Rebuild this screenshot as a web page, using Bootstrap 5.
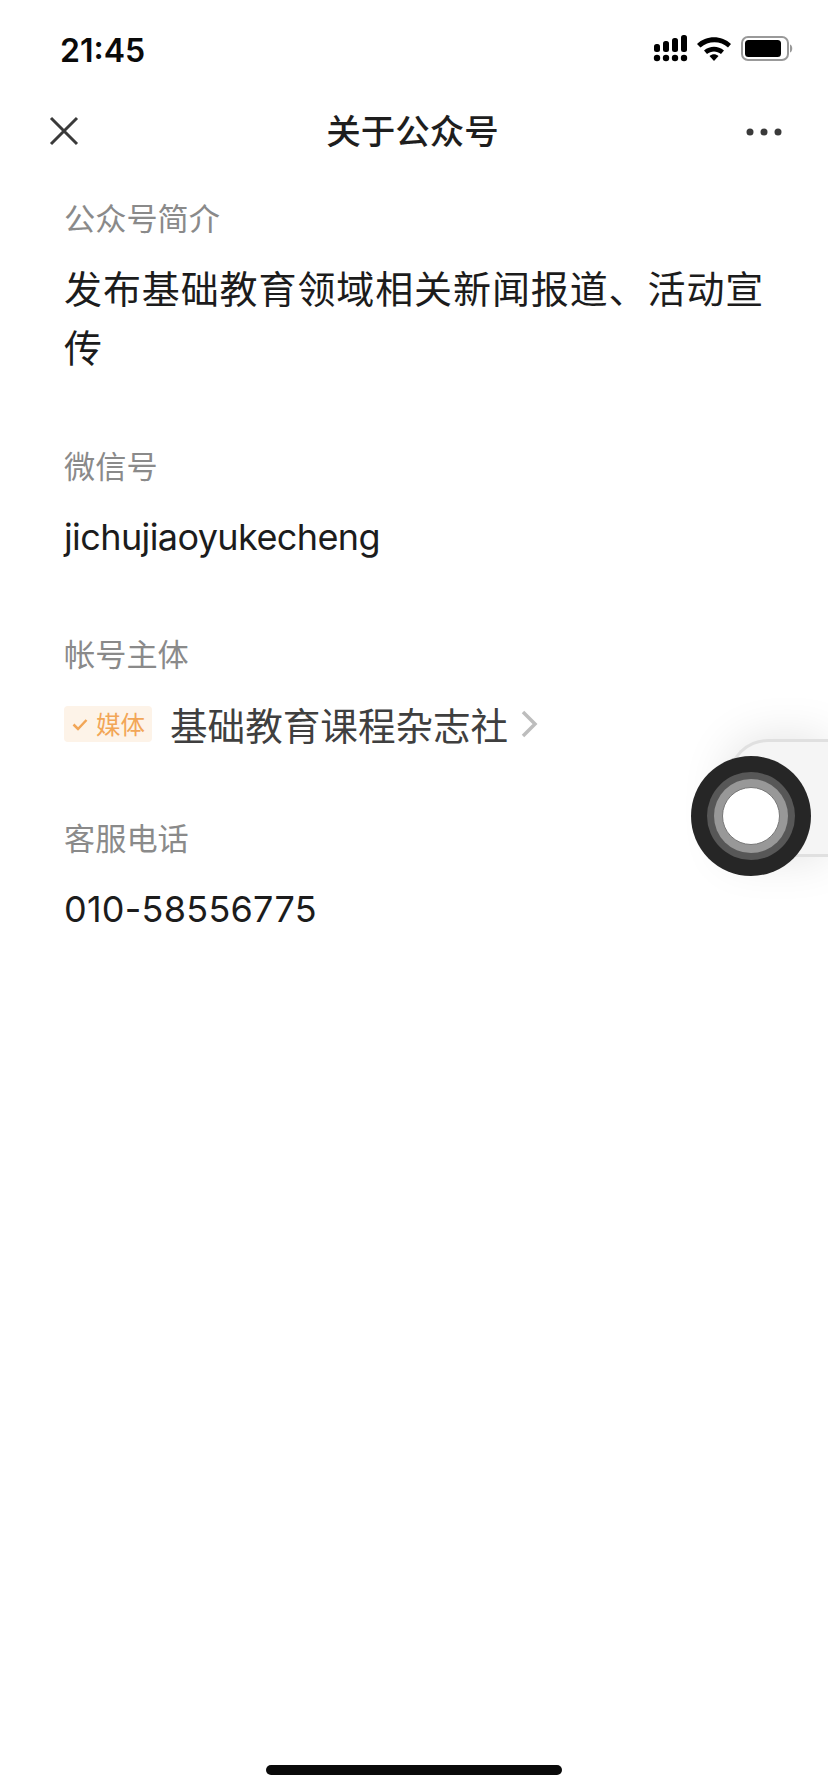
<!DOCTYPE html>
<html lang="zh"><head><meta charset="utf-8">
<link href="https://cdn.jsdelivr.net/npm/bootstrap@5.3.0/dist/css/bootstrap.min.css" rel="stylesheet">
<style>
html,body{width:828px;height:1792px;overflow:hidden;background:#fff;}
body{font-family:"Inter","Noto Sans CJK SC",sans-serif;position:relative;color:#1b1b1b;}
.phone-status{height:98px;padding:0 33px 0 60px;}
.clock-text{font-family:"Inter",sans-serif;font-weight:600;font-size:32px;line-height:1;color:#0a0a0a;margin-top:3px;}
.phone-nav{height:66px;padding:0 46px 0 49px;}
.nav-heading{font-family:"Noto Sans CJK SC",sans-serif;font-size:34.500px;font-weight:500;color:#1e1e1e;line-height:1;margin-bottom:3px;}
.nav-center{position:absolute;left:0;right:3px;text-align:center;}
.more-dots{margin-top:2px;}
.info-wrap{padding:0 58px 0 64px;}
.info-label{font-family:"Noto Sans CJK SC",sans-serif;font-size:31.200px;line-height:42px;color:#8a8a8a;}
.info-value{font-family:"Noto Sans CJK SC",sans-serif;font-size:38px;line-height:59px;color:#1c1c1c;letter-spacing:.9px;}
.latin-value{font-family:"Inter","Noto Sans CJK SC",sans-serif;font-size:36px;line-height:60px;}
.account-id{letter-spacing:-.6px;}
.phone-num{letter-spacing:.25px;}
.gap-a{margin-top:32px;}.gap-b{margin-top:19px;}.gap-c{margin-top:69px;}.gap-d{margin-top:21px;}.gap-e{margin-top:65px;}.gap-f{margin-top:20px;}.gap-g{margin-top:62px;}
.media-tag{width:88px;height:36px;background:#fdf3e8;border-radius:4px;color:#f2a657;font-size:24.500px;font-family:"Noto Sans CJK SC",sans-serif;line-height:1;gap:8px;padding-left:8px;}
.org-name{font-family:"Noto Sans CJK SC",sans-serif;font-size:37.600px;color:#3f3f3f;line-height:60px;margin-left:18px;}
.org-arrow{margin-left:13px;}
.float-panel{position:absolute;left:728px;top:739px;width:100px;height:118px;border:3px solid #e0e0e0;border-right:0;border-radius:40px 0 0 0;background:#f5f5f5;box-shadow:0 0 48px rgba(0,0,0,.12);}
.touch-disc{position:absolute;left:691px;top:756px;width:120px;height:120px;border-radius:50%;background:#262626;}
.touch-ring1{width:88px;height:88px;border-radius:50%;background:#575757;}
.touch-ring2{width:74px;height:74px;border-radius:50%;background:#989898;}
.touch-core{width:58px;height:58px;border-radius:50%;background:#fff;border:1px solid #777;}
.home-bar{position:absolute;left:266px;top:1765px;width:296px;height:10px;border-radius:5px;background:#0a0a0a;}
</style></head><body>
<div class="phone-status d-flex justify-content-between align-items-center">
<span class="clock-text">21:45</span>
<svg width="142" height="28" viewBox="0 0 142 28">
<g fill="#000"><rect x="1" y="9" width="6" height="8" rx="2.500"/><rect x="10" y="6" width="6" height="11" rx="2.500"/><rect x="19" y="3" width="6" height="14" rx="2.500"/><rect x="28" y="0" width="6" height="17" rx="2.500"/>
<circle cx="4" cy="23" r="3.200"/><circle cx="13" cy="23" r="3.200"/><circle cx="22" cy="23" r="3.200"/><circle cx="31" cy="23" r="3.200"/>
<path d="M44 9C53 0 69 0 78 9L75 12.500C67.500 5.500 55.500 5.500 47.500 12.500Z"/><path d="M51 15.500C57 10.500 65 10.500 71 15.500L68 19C64 15.500 58 15.500 54 19Z"/><path d="M56.500 21C59.500 18.500 62.500 18.500 65.500 21L61 26Z"/></g>
<rect x="89" y="2" width="46" height="23" rx="6" fill="none" stroke="#999" stroke-width="2"/><rect x="92" y="5" width="36" height="17" rx="3.500" fill="#000"/><path d="M137 9.500C140 10.500 140 16.500 137 17.500Z" fill="#999"/>
</svg>
</div>
<div class="phone-nav d-flex justify-content-between align-items-center position-relative">
<svg width="30" height="30" viewBox="0 0 30 30"><path d="M2 2L28 28M28 2L2 28" stroke="#3a3a3a" stroke-width="3" fill="none"/></svg>
<span class="nav-heading nav-center">关于公众号</span>
<svg class="more-dots" width="36" height="8" viewBox="0 0 36 8"><g fill="#3a3a3a"><circle cx="4" cy="4" r="3.500"/><circle cx="18" cy="4" r="3.500"/><circle cx="32" cy="4" r="3.500"/></g></svg>
</div>
<div class="info-wrap">
<div class="info-label gap-a">公众号简介</div>
<div class="info-value gap-b">发布基础教育领域相关新闻报道、活动宣传</div>
<div class="info-label gap-c">微信号</div>
<div class="info-value latin-value account-id gap-d">jichujiaoyukecheng</div>
<div class="info-label gap-e">帐号主体</div>
<div class="d-flex align-items-center gap-f">
<span class="media-tag d-inline-flex align-items-center"><svg width="16" height="13" viewBox="0 0 16 13"><path d="M1.500 6.500L6 11L14.500 2" stroke="#f2a657" stroke-width="2.500" fill="none"/></svg>媒体</span>
<span class="org-name">基础教育课程杂志社</span>
<svg class="org-arrow" width="17" height="28" viewBox="0 0 17 28"><path d="M2 2L14 14L2 26" stroke="#bdbdbd" stroke-width="3.500" fill="none"/></svg>
</div>
<div class="info-label gap-g">客服电话</div>
<div class="info-value latin-value phone-num gap-d">010-58556775</div>
</div>
<div class="float-panel"></div>
<div class="touch-disc d-flex align-items-center justify-content-center"><div class="touch-ring1 d-flex align-items-center justify-content-center"><div class="touch-ring2 d-flex align-items-center justify-content-center"><div class="touch-core"></div></div></div></div>
<div class="home-bar"></div>
</body></html>
